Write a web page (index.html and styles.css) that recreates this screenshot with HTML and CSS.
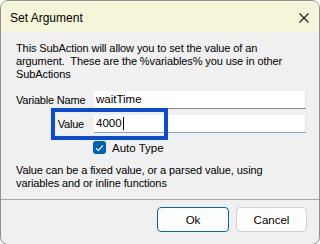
FILE: index.html
```html
<!DOCTYPE html>
<html>
<head>
<meta charset="utf-8">
<link rel="stylesheet" href="styles.css">
</head>
<body>
<div class="window">
  <div class="titlebar">
    <span class="title">Set Argument</span>
    <svg class="close" width="10" height="10" viewBox="0 0 10 10"><path d="M0.5 0.5 L9.5 9.5 M9.5 0.5 L0.5 9.5" stroke="#1a1a1a" stroke-width="1.1" fill="none"/></svg>
  </div>
  <div class="content">
    <p class="desc">This SubAction will allow you to set the value of an<br>argument.&nbsp; These are the %variables% you use in other<br>SubActions</p>
    <div class="form">
      <label class="lbl">Variable Name</label>
      <div class="input">waitTime</div>
      <label class="lbl">Value</label>
      <div class="input focused">4000<span class="caret"></span></div>
      <div></div>
      <div class="check-row">
        <span class="checkbox"><svg width="9" height="8" viewBox="0 0 9 8"><path d="M1 4.2 L3.4 6.4 L8 1.4" stroke="#fff" stroke-width="1.2" fill="none"/></svg></span>
        <span class="check-label">Auto Type</span>
      </div>
    </div>
    <p class="desc desc2">Value can be a fixed value, or a parsed value, using<br>variables and or inline functions</p>
  </div>
  <div class="footer">
    <button class="btn primary">Ok</button>
    <button class="btn cancel">Cancel</button>
  </div>
  <div class="highlight"></div>
</div>
</body>
</html>
```
FILE: styles.css
```css
html, body {
  margin: 0;
  padding: 0;
  background: #ffffff;
}
.window {
  position: relative;
  width: 320px;
  height: 245px;
  box-sizing: border-box;
  border: 1px solid #8f8f8f;
  border-radius: 8px 8px 8px 8px;
  overflow: hidden;
  background: #f0f0f0;
  font-family: "Liberation Sans", Arial, sans-serif;
  font-size: 11px;
  color: #000;
}
.titlebar {
  height: 31px;
  background: #f5f5d9;
  display: flex;
  align-items: center;
  justify-content: space-between;
  padding: 0 10px 0 9px;
}
.title {
  font-size: 12px;
  color: #000;
  margin-top: 2px;
}
.close {
  display: block;
  margin-top: 2px;
}
.content {
  padding: 0 12px 0 15px;
}
.desc {
  margin: 10px 0 0 0;
  line-height: 13px;
  white-space: nowrap;
  letter-spacing: -0.1px;
}
.form {
  display: grid;
  grid-template-columns: 68px 212px;
  column-gap: 10px;
  row-gap: 6px;
  margin-top: 10px;
  align-items: center;
}
.lbl {
  text-align: right;
  white-space: nowrap;
  letter-spacing: -0.2px;
}
.input {
  height: 17px;
  background: #fff;
  border-bottom: 1px solid #868686;
  box-shadow: inset -1px 0 0 #e2e2e2;
  padding-left: 2px;
  line-height: 17px;
  font-size: 11.5px;
  display: flex;
  align-items: center;
}
.input.focused {
  border-bottom-color: #8aa3c4;
}
.caret {
  display: inline-block;
  width: 1px;
  height: 13px;
  background: #000;
  margin-left: 1px;
}
.check-row {
  display: flex;
  align-items: center;
  margin-top: 2px;
  margin-left: -1px;
  height: 13px;
}
.checkbox {
  width: 13px;
  height: 13px;
  border-radius: 3px;
  background: #005fb8;
  display: flex;
  align-items: center;
  justify-content: center;
}
.check-label {
  margin-left: 6px;
  font-size: 11.5px;
}
.desc2 {
  margin-top: 10px;
}
.footer {
  margin-top: 9px;
  border-top: 1px solid #a8a8a8;
  display: flex;
  justify-content: flex-end;
  gap: 7px;
  padding: 7px 12px 0 0;
}
.btn {
  height: 25px;
  box-sizing: border-box;
  background: #fdfdfd;
  border: 1px solid #d0d0d0;
  border-radius: 4px;
  font-family: "Liberation Sans", Arial, sans-serif;
  font-size: 11.5px;
  color: #000;
  padding: 0;
}
.btn.primary {
  width: 72px;
  border-color: #0067c0;
}
.btn.cancel {
  width: 71px;
}
.highlight {
  position: absolute;
  left: 50px;
  top: 107px;
  width: 117px;
  height: 32px;
  box-sizing: border-box;
  border: 4px solid #0a4bd4;
}
```
